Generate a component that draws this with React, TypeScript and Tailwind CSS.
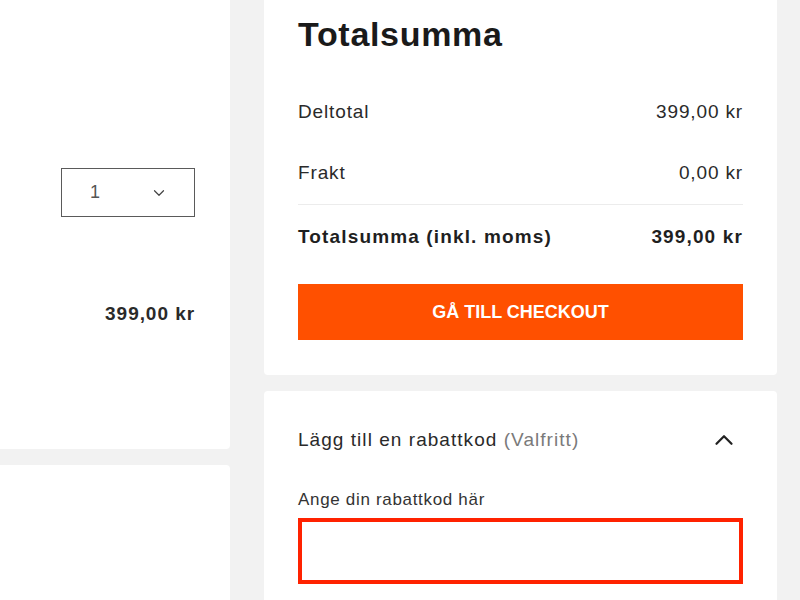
import { ChevronDown, ChevronUp } from 'lucide-react';

const font = { fontFamily: '"Liberation Sans", Arial, sans-serif' };

function SummaryRow({ label, value, bold }: { label: string; value: string; bold?: boolean }) {
  return (
    <div
      className={
        bold
          ? 'flex h-[64px] items-center justify-between text-[19px] font-bold tracking-[0.06em] text-[#1f1f1f]'
          : 'flex h-[61px] items-center justify-between text-[19px] tracking-[0.045em] text-[#2a2a2a]'
      }
    >
      <span>{label}</span>
      <span>{value}</span>
    </div>
  );
}

export default function App() {
  return (
    <div className="flex h-[600px] w-[800px] gap-[34px] overflow-hidden bg-[#f2f2f2]" style={font}>
      {/* cart column */}
      <div className="flex w-[230px] shrink-0 flex-col gap-[16px]">
        <div className="flex h-[449px] flex-col items-end rounded-br-[4px] bg-white pr-[35px]">
          <div className="mt-[168px] flex h-[49px] w-[134px] items-center justify-between border border-[#5a5a5a] pl-[28px] pr-[26px] text-[18px] text-[#555]">
            <span>1</span>
            <ChevronDown className="h-[18px] w-[18px] text-[#444]" strokeWidth={1.6} />
          </div>
          <div className="mt-[83px] text-[19px] font-bold tracking-[0.05em] text-[#2a2a2a]">399,00 kr</div>
        </div>
        <div className="flex-1 rounded-tr-[4px] bg-white" />
      </div>

      {/* summary column */}
      <div className="flex w-[513px] shrink-0 flex-col gap-[16px]">
        <div className="flex flex-col rounded-b-[4px] bg-white px-[34px] pb-[35px] pt-[14px]">
          <h1 className="h-[40px] text-[34px] font-bold leading-[40px] tracking-[0.02em] text-[#1a1a1a]">Totalsumma</h1>
          <div className="mt-[28px] flex flex-col">
            <SummaryRow label="Deltotal" value="399,00 kr" />
            <div className="border-b border-[#ececec]">
              <SummaryRow label="Frakt" value="0,00 kr" />
            </div>
            <SummaryRow label="Totalsumma (inkl. moms)" value="399,00 kr" bold />
          </div>
          <button className="mt-[15px] h-[56px] w-full bg-[#ff5000] text-[18px] font-bold text-white">
            GÅ TILL CHECKOUT
          </button>
        </div>

        <div className="flex flex-1 flex-col rounded-t-[4px] bg-white px-[34px] pt-[28px]">
          <div className="flex h-[42px] items-center justify-between">
            <span className="text-[19px] tracking-[0.055em] text-[#2a2a2a]">
              Lägg till en rabattkod <span className="text-[#7a7a7a]">(Valfritt)</span>
            </span>
            <ChevronUp className="mr-[4px] h-[30px] w-[30px] text-[#222]" strokeWidth={1.8} />
          </div>
          <label className="mt-[28px] block h-[22px] text-[17px] leading-[22px] tracking-[0.04em] text-[#333]">
            Ange din rabattkod här
          </label>
          <input className="mt-[7px] h-[66px] w-full border-[4px] border-[#ff2200] bg-white outline-none" />
        </div>
      </div>
    </div>
  );
}
